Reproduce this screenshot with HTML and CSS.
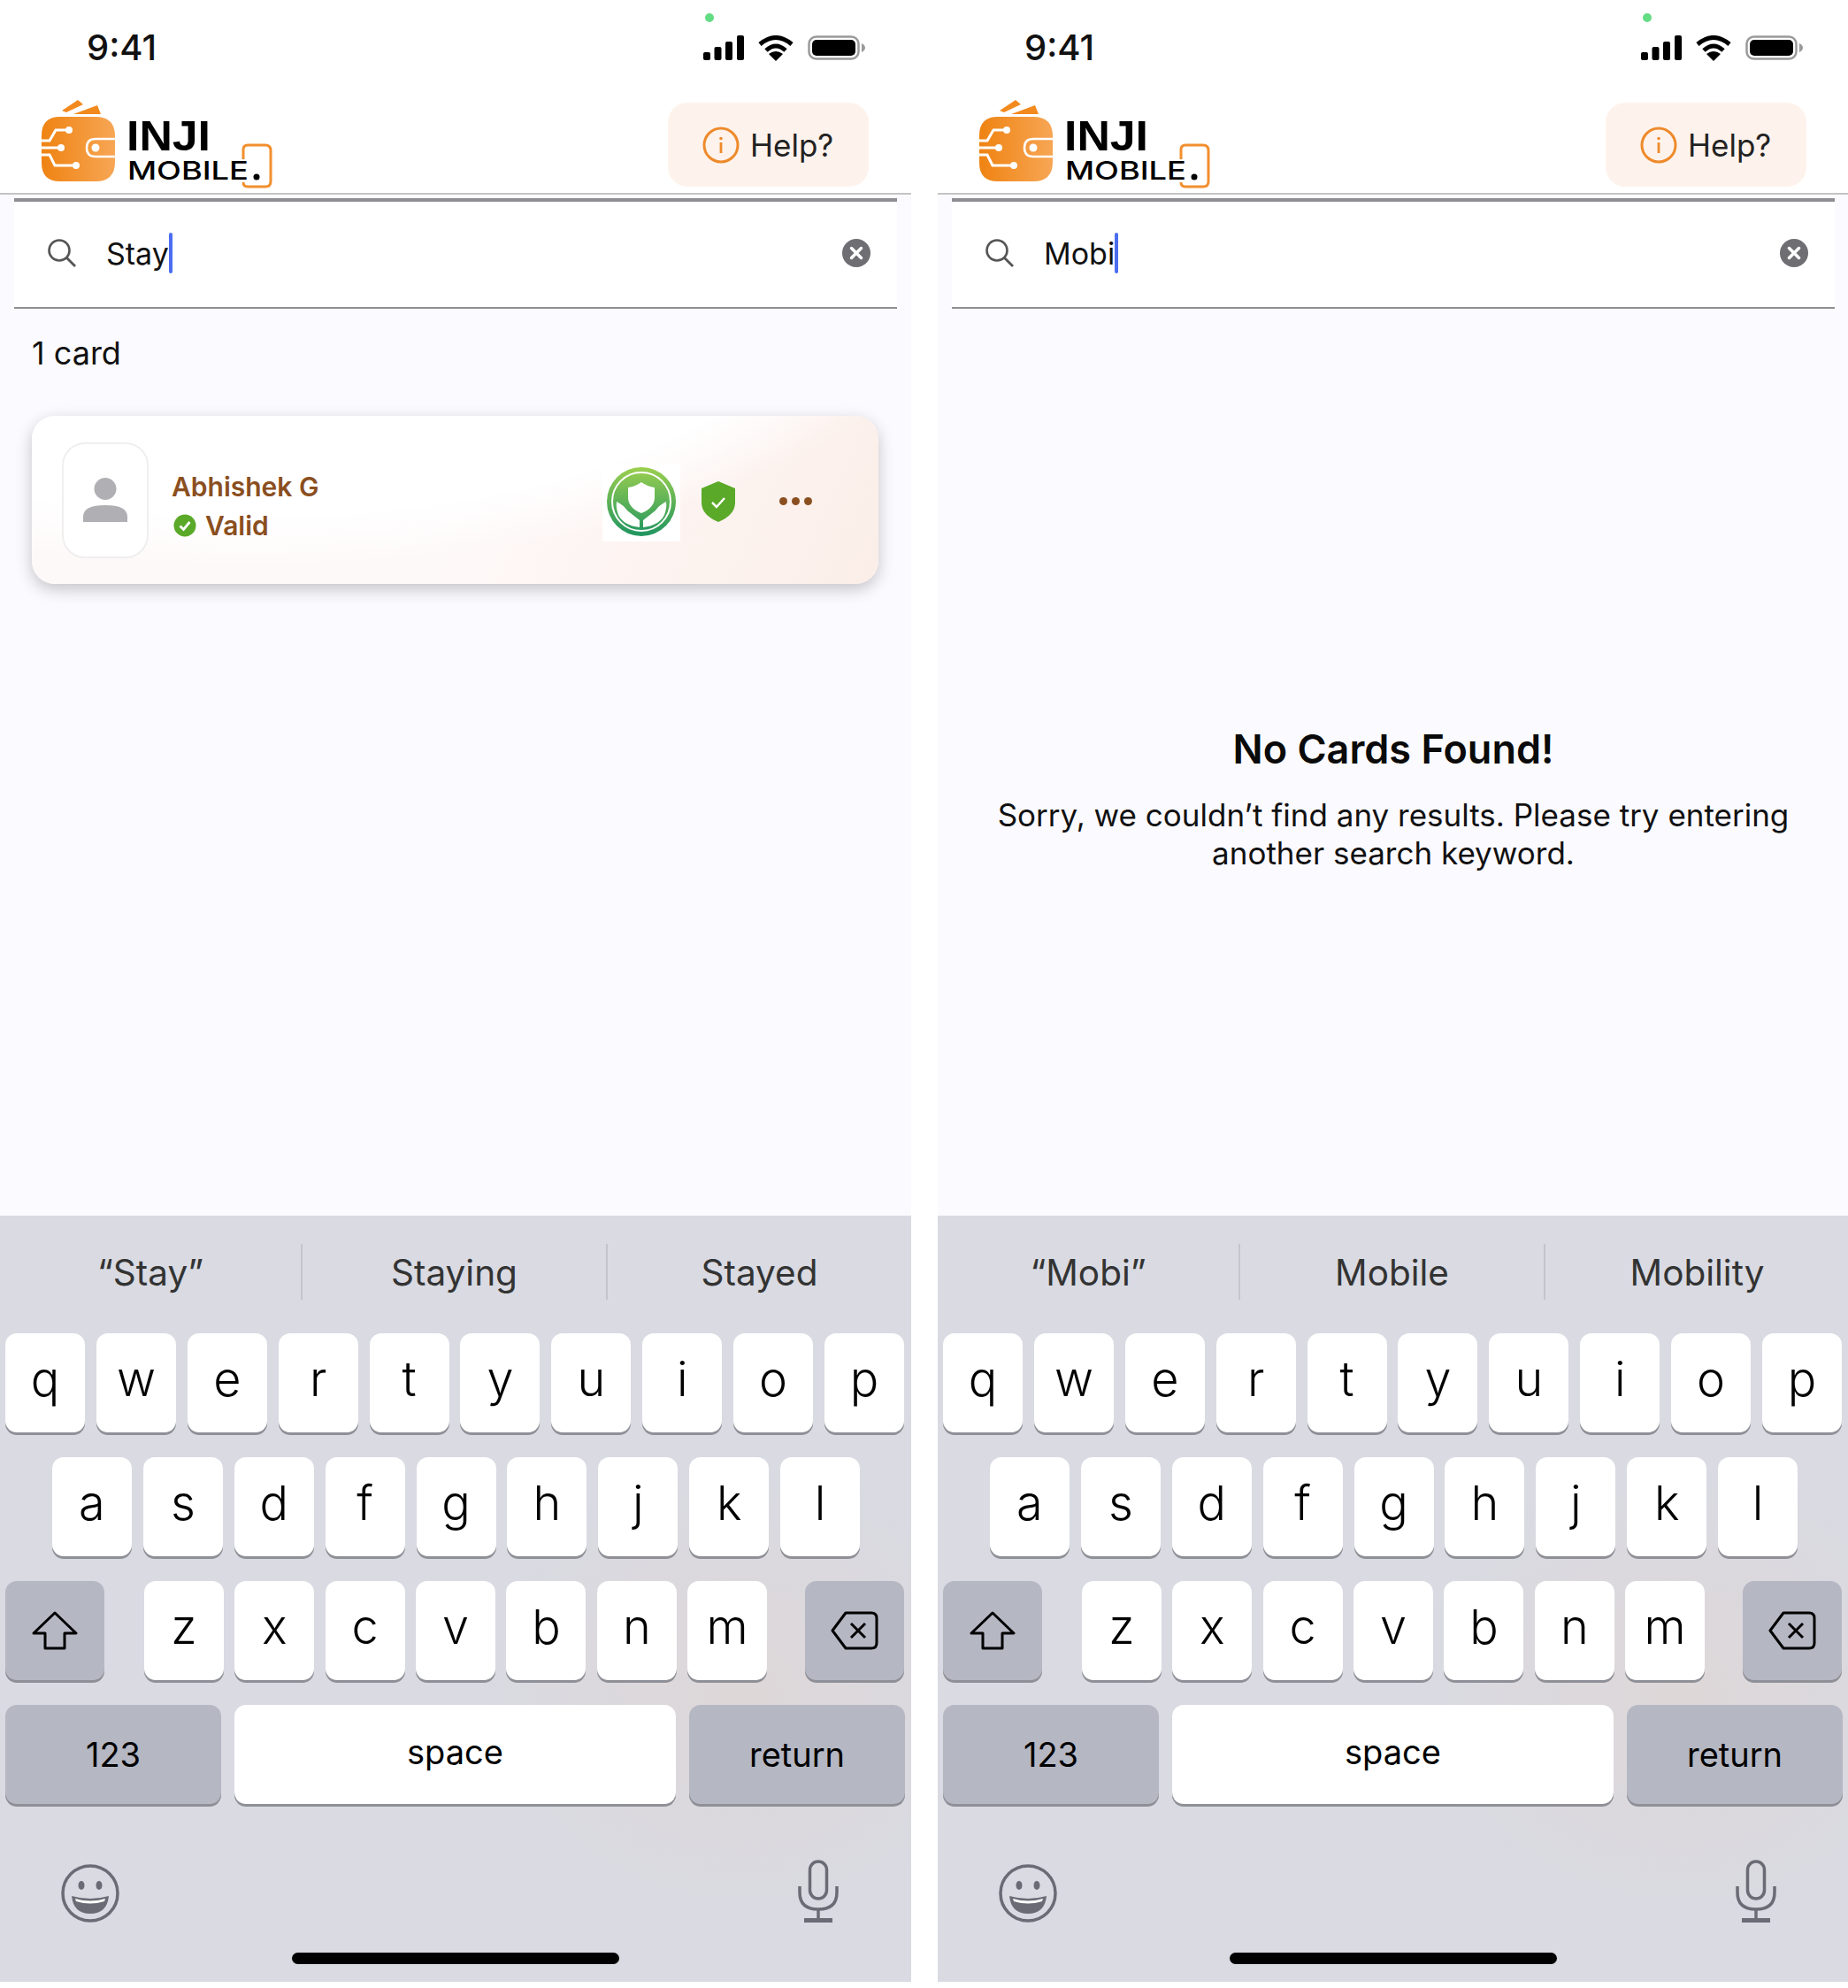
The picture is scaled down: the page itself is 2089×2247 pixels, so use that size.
FILE: index.html
```html
<!DOCTYPE html>
<html lang="en">
<head>
    <meta charset="UTF-8">
    <title>Inji Mobile search</title>
    <link rel="stylesheet" href="styles.css">
</head>
<body>
    <svg class="defs" width="0" height="0">
        <defs>
            <linearGradient id="walletGrad" x1="0" x2="1" y1="0" y2="0">
                <stop offset="0" stop-color="#ef8312"/>
                <stop offset="1" stop-color="#f7a655"/>
            </linearGradient>
            <linearGradient id="sealGrad" x1="0" x2="0" y1="0" y2="1">
                <stop offset="0" stop-color="#9ccf4f"/>
                <stop offset="1" stop-color="#1f9560"/>
            </linearGradient>
            <symbol id="logo" viewBox="47 113 262 100">
                <path d="M70 125 L88 113 L94 118 L75 127Z M83 129 L110 119 L114 129Z" fill="#f28a1f"/>
                <path d="M68 132 H108 Q130 132 130 154 V183 Q130 205 108 205 H68 Q47 205 47 184 V153 Q47 132 68 132Z" fill="url(#walletGrad)"/>
                <path d="M47 159 H56 L63 147 H78 M47 167 H69 M47 175 H56 L62 187 H86" fill="none" stroke="#fff" stroke-width="3"/>
                <circle cx="78" cy="147" r="4" fill="#fff"/>
                <circle cx="69" cy="167" r="4" fill="#fff"/>
                <circle cx="86" cy="187" r="4" fill="#fff"/>
                <path d="M130 157 H108 Q98 157 98 167 Q98 177 108 177 H130" fill="none" stroke="#fff" stroke-width="2.500"/>
                <circle cx="108" cy="167" r="4.500" fill="#fff"/>
                <path d="M275 180 V169 Q275 164 280 164 H300 Q306 164 306 170 V205 Q306 211 300 211 H280 Q275 211 275 206" fill="none" stroke="#f28f2e" stroke-width="3"/>
                <text class="logo-inji" x="143" y="170" textLength="95" lengthAdjust="spacingAndGlyphs">INJI</text>
                <text class="logo-mobile" x="144" y="203" textLength="137" lengthAdjust="spacingAndGlyphs">MOBILE</text>
                <circle cx="290" cy="200" r="3.500" fill="#000"/>
            </symbol>
            <symbol id="signal" viewBox="0 0 46 28">
                <rect x="0" y="19" width="8" height="9" rx="2"/>
                <rect x="12.500" y="13" width="8" height="15" rx="2"/>
                <rect x="25" y="7" width="8" height="21" rx="2"/>
                <rect x="38" y="0" width="8" height="28" rx="2"/>
            </symbol>
            <symbol id="wifi" viewBox="0 0 40 29">
                <path d="M2 10 Q20 -5 38 10 M9 17 Q20 7 31 17" fill="none" stroke="#000" stroke-width="5"/>
                <path d="M20 29 L12 21 Q20 15 28 21Z"/>
            </symbol>
            <symbol id="battery" viewBox="0 0 65 28">
                <rect x="1.500" y="1.500" width="56" height="25" rx="8" fill="none" stroke="#9a9a9a" stroke-width="2.500"/>
                <rect x="5" y="5" width="49" height="18" rx="5"/>
                <path d="M61 9 Q65 11 65 14 Q65 17 61 19Z" fill="#9a9a9a"/>
            </symbol>
            <symbol id="info" viewBox="0 0 42 42">
                <circle cx="21" cy="21" r="19" fill="none" stroke="#ee8a2b" stroke-width="3"/>
                <rect x="19.600" y="18" width="2.800" height="12" fill="#ee8a2b"/>
                <circle cx="21" cy="13.500" r="1.800" fill="#ee8a2b"/>
            </symbol>
            <symbol id="search" viewBox="0 0 34 34">
                <circle cx="14" cy="14" r="11.500" fill="none" stroke="#555" stroke-width="2.600"/>
                <path d="M22.500 22.500 L32 32" stroke="#555" stroke-width="2.800"/>
            </symbol>
            <symbol id="clear" viewBox="0 0 32 32">
                <circle cx="16" cy="16" r="16" fill="#6e6e73"/>
                <path d="M10.500 10.500 L21.500 21.500 M21.500 10.500 L10.500 21.500" stroke="#fff" stroke-width="3.500" stroke-linecap="round"/>
            </symbol>
            <symbol id="person" viewBox="0 0 50 50">
                <ellipse cx="25" cy="12.500" rx="12.500" ry="12.500" fill="#b0afb3"/>
                <path d="M0 50 V44 Q0 31 25 31 Q50 31 50 44 V50Z" fill="#b0afb3"/>
            </symbol>
            <symbol id="tick" viewBox="0 0 26 26">
                <circle cx="13" cy="13" r="12.500" fill="#5aa928"/>
                <path d="M7.500 13.500 L11.500 17.500 L18.500 9" fill="none" stroke="#fff" stroke-width="2.800"/>
            </symbol>
            <symbol id="seal" viewBox="0 0 88 88">
                <rect width="88" height="88" fill="#fff"/>
                <circle cx="44" cy="43" r="39" fill="url(#sealGrad)"/>
                <circle cx="44" cy="43" r="33" fill="none" stroke="#fff" stroke-width="2"/>
                <path d="M44 21 Q51 26 59 27 V38 Q59 50 44 56 Q29 50 29 38 V27 Q37 26 44 21Z" fill="#fff"/>
                <path d="M16 43 Q24 47 28 53 L42 64 V72 Q24 70 18 58 Q15 50 16 43Z" fill="#fff"/>
                <path d="M72 43 Q64 47 60 53 L46 64 V72 Q64 70 70 58 Q73 50 72 43Z" fill="#fff"/>
            </symbol>
            <symbol id="shield" viewBox="0 0 38 46">
                <path d="M19 0 L38 8 V24 Q38 38 19 46 Q0 38 0 24 V8Z" fill="#5aa928"/>
                <path d="M12 24 L17 29 L26 19" fill="none" stroke="#fff" stroke-width="2.500"/>
            </symbol>
            <symbol id="shift" viewBox="0 0 52 44">
                <path d="M26 2 L50 25 H37 V42 H15 V25 H2Z" fill="none" stroke="#000" stroke-width="3" stroke-linejoin="round"/>
            </symbol>
            <symbol id="backspace" viewBox="0 0 54 44">
                <path d="M17 2 H46 Q52 2 52 8 V36 Q52 42 46 42 H17 L2 22Z" fill="none" stroke="#000" stroke-width="3" stroke-linejoin="round"/>
                <path d="M23 14 L39 30 M39 14 L23 30" stroke="#000" stroke-width="3"/>
            </symbol>
            <symbol id="emoji" viewBox="0 0 66 66">
                <circle cx="33" cy="33" r="31" fill="none" stroke="#6b6b76" stroke-width="3.500"/>
                <ellipse cx="23" cy="24" rx="3.500" ry="5" fill="#6b6b76"/>
                <ellipse cx="43" cy="24" rx="3.500" ry="5" fill="#6b6b76"/>
                <path d="M12 36 Q33 42 54 36 Q52 56 33 56 Q14 56 12 36Z" fill="#6b6b76"/>
                <path d="M16 39 Q33 44 50 39 L49 42 Q33 47 17 42Z" fill="#fff"/>
            </symbol>
            <symbol id="mic" viewBox="0 0 46 71">
                <rect x="13.500" y="2" width="19" height="42" rx="9.500" fill="none" stroke="#6b6b76" stroke-width="3.500"/>
                <path d="M2 30 V37 Q2 56 23 56 Q44 56 44 37 V30 M23 56 V68" fill="none" stroke="#6b6b76" stroke-width="3.500"/>
                <rect x="7" y="66" width="32" height="5" fill="#6b6b76"/>
            </symbol>
        </defs>
    </svg>

    <div class="screens">
        <section class="phone">
            <div class="top">
                <div class="status">
                    <span class="time">9:41</span>
                    <span class="camera-dot"></span>
                    <div class="status-icons">
                        <svg class="ic-signal"><use href="#signal"/></svg>
                        <svg class="ic-wifi"><use href="#wifi"/></svg>
                        <svg class="ic-battery"><use href="#battery"/></svg>
                    </div>
                </div>
                <header class="header">
                    <svg class="logo"><use href="#logo"/></svg>
                    <div class="help">
                        <svg class="ic-info"><use href="#info"/></svg>
                        <span>Help?</span>
                    </div>
                </header>
            </div>
            <main class="content">
                <div class="search">
                    <svg class="ic-search"><use href="#search"/></svg>
                    <span class="search-text">Stay</span><span class="caret"></span>
                    <svg class="ic-clear"><use href="#clear"/></svg>
                </div>
                <p class="count">1 card</p>
                <div class="card">
                    <div class="avatar"><svg class="ic-person"><use href="#person"/></svg></div>
                    <div class="card-info">
                        <div class="card-name">Abhishek G</div>
                        <div class="card-status">
                            <svg class="ic-tick"><use href="#tick"/></svg>
                            <span>Valid</span>
                        </div>
                    </div>
                    <svg class="ic-seal"><use href="#seal"/></svg>
                    <svg class="ic-shield"><use href="#shield"/></svg>
                    <div class="dots"><i></i><i></i><i></i></div>
                </div>
            </main>
            <div class="keyboard">
                <div class="suggestions">
                    <span>“Stay”</span>
                    <span>Staying</span>
                    <span>Stayed</span>
                </div>
                <div class="key-row">
                    <b class="key">q</b><b class="key">w</b><b class="key">e</b><b class="key">r</b><b class="key">t</b><b class="key">y</b><b class="key">u</b><b class="key">i</b><b class="key">o</b><b class="key">p</b>
                </div>
                <div class="key-row row-mid">
                    <b class="key">a</b><b class="key">s</b><b class="key">d</b><b class="key">f</b><b class="key">g</b><b class="key">h</b><b class="key">j</b><b class="key">k</b><b class="key">l</b>
                </div>
                <div class="key-row row-shift">
                    <b class="key key-fn key-wide"><svg class="ic-shift"><use href="#shift"/></svg></b>
                    <div class="letters">
                        <b class="key">z</b><b class="key">x</b><b class="key">c</b><b class="key">v</b><b class="key">b</b><b class="key">n</b><b class="key">m</b>
                    </div>
                    <b class="key key-fn key-wide"><svg class="ic-backspace"><use href="#backspace"/></svg></b>
                </div>
                <div class="key-row row-bottom">
                    <b class="key key-fn key-label">123</b>
                    <b class="key key-label key-space">space</b>
                    <b class="key key-fn key-label">return</b>
                </div>
                <div class="kb-tools">
                    <svg class="ic-emoji"><use href="#emoji"/></svg>
                    <svg class="ic-mic"><use href="#mic"/></svg>
                </div>
                <div class="home-bar"></div>
            </div>
        </section>

        <section class="phone">
            <div class="top">
                <div class="status">
                    <span class="time">9:41</span>
                    <span class="camera-dot"></span>
                    <div class="status-icons">
                        <svg class="ic-signal"><use href="#signal"/></svg>
                        <svg class="ic-wifi"><use href="#wifi"/></svg>
                        <svg class="ic-battery"><use href="#battery"/></svg>
                    </div>
                </div>
                <header class="header">
                    <svg class="logo"><use href="#logo"/></svg>
                    <div class="help">
                        <svg class="ic-info"><use href="#info"/></svg>
                        <span>Help?</span>
                    </div>
                </header>
            </div>
            <main class="content">
                <div class="search">
                    <svg class="ic-search"><use href="#search"/></svg>
                    <span class="search-text">Mobi</span><span class="caret"></span>
                    <svg class="ic-clear"><use href="#clear"/></svg>
                </div>
                <div class="empty">
                    <h2>No Cards Found!</h2>
                    <p>Sorry, we couldn’t find any results. Please try entering another search keyword.</p>
                </div>
            </main>
            <div class="keyboard">
                <div class="suggestions">
                    <span>“Mobi”</span>
                    <span>Mobile</span>
                    <span>Mobility</span>
                </div>
                <div class="key-row">
                    <b class="key">q</b><b class="key">w</b><b class="key">e</b><b class="key">r</b><b class="key">t</b><b class="key">y</b><b class="key">u</b><b class="key">i</b><b class="key">o</b><b class="key">p</b>
                </div>
                <div class="key-row row-mid">
                    <b class="key">a</b><b class="key">s</b><b class="key">d</b><b class="key">f</b><b class="key">g</b><b class="key">h</b><b class="key">j</b><b class="key">k</b><b class="key">l</b>
                </div>
                <div class="key-row row-shift">
                    <b class="key key-fn key-wide"><svg class="ic-shift"><use href="#shift"/></svg></b>
                    <div class="letters">
                        <b class="key">z</b><b class="key">x</b><b class="key">c</b><b class="key">v</b><b class="key">b</b><b class="key">n</b><b class="key">m</b>
                    </div>
                    <b class="key key-fn key-wide"><svg class="ic-backspace"><use href="#backspace"/></svg></b>
                </div>
                <div class="key-row row-bottom">
                    <b class="key key-fn key-label">123</b>
                    <b class="key key-label key-space">space</b>
                    <b class="key key-fn key-label">return</b>
                </div>
                <div class="kb-tools">
                    <svg class="ic-emoji"><use href="#emoji"/></svg>
                    <svg class="ic-mic"><use href="#mic"/></svg>
                </div>
                <div class="home-bar"></div>
            </div>
        </section>
    </div>
</body>
</html>
```

FILE: styles.css
```css
* {
    box-sizing: border-box;
}
body {
    margin: 0;
    background: #fff;
    font-family: Inter, "Noto Sans", sans-serif;
    color: #111;
}
.defs {
    display: block;
    height: 0;
}
.screens {
    display: grid;
    grid-template-columns: 1030px 1030px;
    column-gap: 30px;
    width: 2089px;
    overflow: hidden;
}
.phone {
    height: 2240px;
    display: flex;
    flex-direction: column;
    background: #fbfaff;
}

/* status bar and header */
.top {
    background: #fff;
    border-bottom: 2px solid #c4c4c6;
    height: 220px;
}
.status {
    height: 98px;
    display: flex;
    align-items: center;
    justify-content: space-between;
    padding: 10px 52px 0 98px;
    position: relative;
}
.time {
    font-size: 40px;
    font-weight: 500;
    line-height: 1;
}
.camera-dot {
    position: absolute;
    left: 797px;
    top: 15px;
    width: 10px;
    height: 10px;
    border-radius: 50%;
    background: #63dc84;
}
.status-icons {
    display: flex;
    align-items: center;
    gap: 16px;
}
.ic-signal {
    width: 46px;
    height: 28px;
}
.ic-wifi {
    width: 40px;
    height: 29px;
}
.ic-battery {
    width: 65px;
    height: 28px;
}
.header {
    display: flex;
    justify-content: space-between;
    padding: 15px 48px 0 47px;
}
.logo {
    width: 262px;
    height: 100px;
}
.logo-inji {
    font-family: "Liberation Sans", sans-serif;
    font-weight: 700;
    font-size: 48px;
}
.logo-mobile {
    font-family: Inter, sans-serif;
    font-weight: 500;
    font-size: 29px;
}
.help {
    width: 227px;
    height: 95px;
    margin-top: 3px;
    display: flex;
    align-items: center;
    gap: 12px;
    padding-left: 39px;
    background: #fef3ec;
    border-radius: 22px;
    font-size: 35px;
    color: #222;
}
.ic-info {
    width: 42px;
    height: 42px;
}

/* search */
.content {
    flex: 1;
    padding: 4px 16px 0;
}
.search {
    height: 125px;
    display: flex;
    align-items: center;
    background: #fff;
    border-top: 4px solid #8e8e93;
    border-bottom: 2px solid #8e8e93;
    padding: 0 30px 3px 37px;
    font-size: 34px;
}
.ic-search {
    width: 34px;
    height: 34px;
    margin-right: 33px;
}
.search-text {
    color: #111;
}
.caret {
    width: 4px;
    height: 46px;
    background: #4b6ef0;
    border-radius: 2px;
}
.ic-clear {
    width: 32px;
    height: 32px;
    margin-left: auto;
}
.count {
    margin: 29px 0 0 20px;
    font-size: 36px;
    line-height: 42px;
}

/* card */
.card {
    margin: 50px 21px 0 20px;
    height: 190px;
    display: flex;
    align-items: center;
    padding: 0 0 0 34px;
    border-radius: 26px;
    background:
        radial-gradient(ellipse 769px 302px at 250px -130px, #fff 80%, rgba(255, 255, 255, 0) 100%),
        linear-gradient(115deg, #fef9f9 50%, #fbeee8 100%);
    box-shadow: 0 6px 18px rgba(0, 0, 0, 0.22);
}
.avatar {
    width: 98px;
    height: 131px;
    display: flex;
    align-items: center;
    justify-content: center;
    background: #fff;
    border: 2px solid #efefef;
    border-radius: 26px;
}
.ic-person {
    width: 50px;
    height: 50px;
}
.card-info {
    margin: 14px 0 0 26px;
    color: #8b4f1f;
    font-size: 30px;
    font-weight: 600;
    line-height: 44px;
}
.card-status {
    display: flex;
    align-items: center;
    gap: 10px;
}
.ic-tick {
    width: 26px;
    height: 26px;
    margin-left: 2px;
}
.ic-seal {
    width: 88px;
    height: 88px;
    margin: 6px 0 0 auto;
}
.ic-shield {
    width: 38px;
    height: 46px;
    margin: 3px 0 0 24px;
}
.dots {
    display: flex;
    gap: 5px;
    margin: 2px 75px 0 50px;
}
.dots i {
    width: 9px;
    height: 9px;
    border-radius: 50%;
    background: #8b4f1f;
}

/* no results */
.empty {
    padding: 471px 20px 0;
    text-align: center;
}
.empty h2 {
    margin: 0;
    font-size: 45px;
    font-weight: 600;
    line-height: 54px;
    color: #0a0a0a;
}
.empty p {
    margin: 26px auto 0;
    font-size: 35px;
    line-height: 43px;
    max-width: 950px;
    color: #111;
}

/* keyboard */
.keyboard {
    height: 866px;
    background:
        radial-gradient(ellipse 300px 260px at 840px 540px, rgba(224, 214, 212, 0.7), rgba(217, 218, 226, 0) 100%),
        #d9dae2;
    display: flex;
    flex-direction: column;
}
.suggestions {
    height: 133px;
    display: grid;
    grid-template-columns: 340px 345px 345px;
    padding-top: 32px;
    font-size: 40.500px;
    color: #333;
    text-align: center;
}
.suggestions span {
    height: 63px;
    line-height: 65px;
}
.suggestions span + span {
    border-left: 2px solid #c4c5cc;
}
.key-row {
    height: 115px;
    margin-bottom: 25px;
    padding: 0 7px 0 6px;
    display: flex;
    gap: 12.900px;
}
.row-mid {
    justify-content: center;
    padding-left: 8px;
}
.row-shift {
    justify-content: space-between;
    gap: 0;
    padding-right: 8px;
}
.row-bottom {
    gap: 15px;
}
.letters {
    display: flex;
    gap: 12.400px;
    margin-left: 2px;
}
.key {
    width: 90px;
    height: 112px;
    display: flex;
    align-items: center;
    justify-content: center;
    background: #fff;
    border-radius: 13px;
    box-shadow: 0 3px 0 #8f9097;
    font-size: 54px;
    font-weight: 300;
    padding-bottom: 10px;
    color: #000;
}
.key-fn {
    background: #b5b7c3;
}
.key-wide {
    width: 112px;
    padding: 0;
}
.key-label {
    width: 244px;
    font-size: 38px;
    font-weight: 400;
    padding-bottom: 0;
}
.key-space {
    flex: 1;
    padding-bottom: 6px;
}
.ic-shift {
    width: 52px;
    height: 44px;
}
.ic-backspace {
    width: 54px;
    height: 44px;
}
.kb-tools {
    display: flex;
    justify-content: space-between;
    padding: 35px 82px 0 69px;
    height: 140px;
}
.kb-tools svg {
    display: block;
}
.ic-emoji {
    width: 66px;
    height: 66px;
    margin-top: 5px;
}
.ic-mic {
    width: 46px;
    height: 71px;
}
.home-bar {
    width: 370px;
    height: 13px;
    margin: 0 auto;
    border-radius: 7px;
    background: #000;
}
```
